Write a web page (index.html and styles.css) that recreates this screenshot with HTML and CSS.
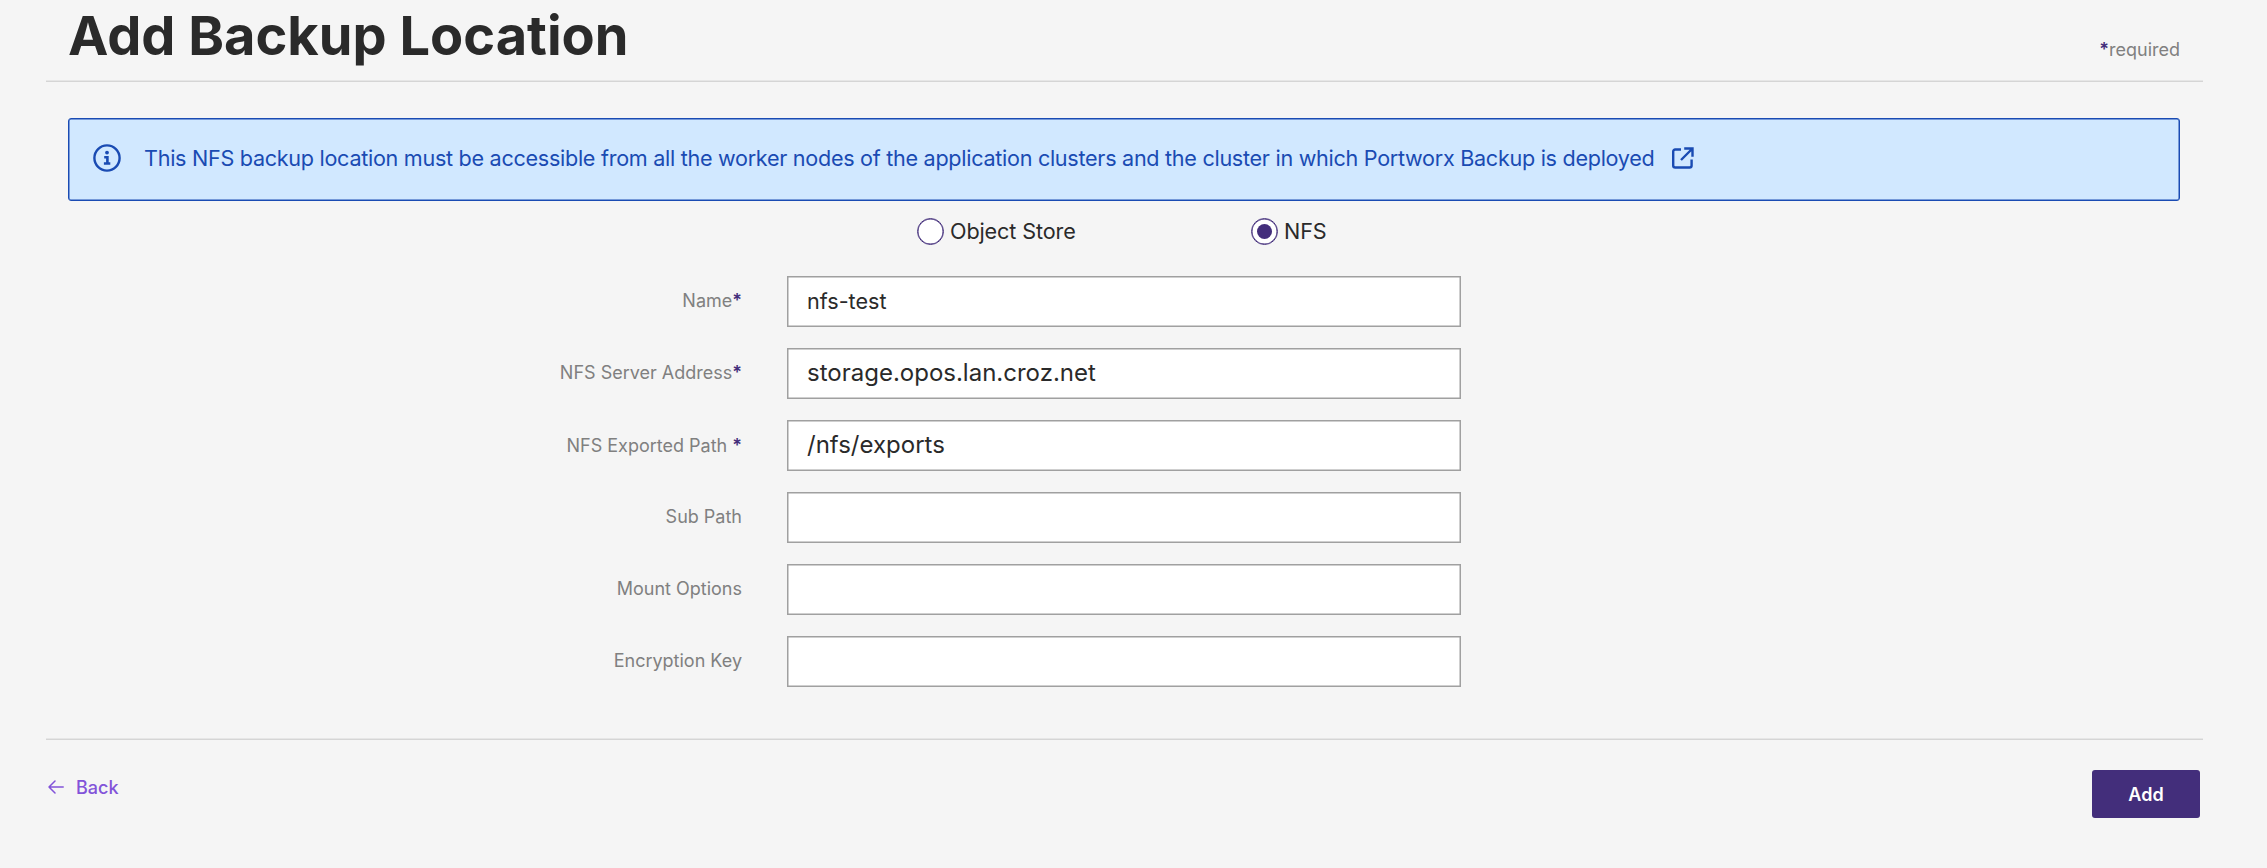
FILE: index.html
```html
<!DOCTYPE html>
<html lang="en">
<head>
<meta charset="utf-8">
<title>Add Backup Location</title>
<link rel="stylesheet" href="styles.css">
</head>
<body>
<main class="page">
  <header class="page-header">
    <h1 class="title">Add Backup Location</h1>
    <span class="required-note"><b class="star">*</b>required</span>
  </header>
  <div class="notice">
    <svg class="notice-icon" viewBox="0 0 28 28" fill="none" stroke="currentColor"><circle cx="14" cy="14" r="12.6" stroke-width="2.4"/><circle cx="14" cy="8.6" r="1.9" fill="currentColor" stroke="none"/><path d="M11.2 13.3h3.2v6.2M10.9 19.5h6.4" stroke-width="2.6"/></svg>
    <span class="notice-text">This NFS backup location must be accessible from all the worker nodes of the application clusters and the cluster in which Portworx Backup is deployed</span>
    <svg class="link-icon" viewBox="0 0 22 22" fill="none" stroke="currentColor" stroke-width="2.4"><path d="M9 2.5H3.2a2 2 0 0 0-2 2v14a2 2 0 0 0 2 2h14.4a2 2 0 0 0 2-2V12.4"/><path d="M12.2 1.5h8.3v8.2M20 2L9 13"/></svg>
  </div>
  <div class="store-types">
    <label class="choice choice-object"><span class="radio"></span><span class="choice-text">Object Store</span></label>
    <label class="choice"><span class="radio radio-on"></span><span class="choice-text">NFS</span></label>
  </div>
  <form class="fields">
    <div class="row"><label class="label"><span>Name</span><b class="star">*</b></label><div class="input input-small"><span>nfs-test</span></div></div>
    <div class="row"><label class="label"><span>NFS Server Address</span><b class="star">*</b></label><div class="input"><span>storage.opos.lan.croz.net</span></div></div>
    <div class="row"><label class="label label-low"><span>NFS Exported Path&nbsp;</span><b class="star">*</b></label><div class="input"><span>/nfs/exports</span></div></div>
    <div class="row"><label class="label"><span>Sub Path</span></label><div class="input"></div></div>
    <div class="row"><label class="label"><span>Mount Options</span></label><div class="input"></div></div>
    <div class="row"><label class="label"><span>Encryption Key</span></label><div class="input"></div></div>
  </form>
  <footer class="page-footer">
    <a class="back"><svg class="back-icon" viewBox="0 0 16 14" fill="none" stroke="currentColor" stroke-width="1.5" stroke-linecap="round" stroke-linejoin="round"><path d="M15.2 7H1M7 1L1 7l6 6"/></svg><span>Back</span></a>
    <button class="add" type="button">Add</button>
  </footer>
</main>
</body>
</html>
```
FILE: styles.css
```css
* { box-sizing: border-box; }
body { margin: 0; background: #f5f5f5; color: #2a2a2a; font-family: Inter, sans-serif; }
.page { width: 2157px; margin-left: 46px; height: 868px; }
.page-header { height: 82px; padding: 0 23px 0 22px; display: flex; justify-content: space-between; border-bottom: 1px solid #d5d5d5; box-shadow: inset 0 -1px #e6e6e6; }
.title { margin: 0; font-size: 54.15px; line-height: 66px; padding-top: 3px; font-weight: 700; white-space: nowrap; }
.required-note { font-size: 18px; line-height: 24px; padding-top: 38px; color: #808080; }
.star { color: #432e7b; font-weight: 600; }
.notice { margin: 36px 23px 0 22px; height: 83px; padding: 0 0 3px 24px; display: flex; align-items: center; border: 1px solid #1a4bb3; border-radius: 3px; background: #d1e8ff; color: #1a4bb3; box-shadow: inset 0 0 0 0.5px #1a4bb3; }
.notice-icon { width: 28px; height: 28px; margin-right: 23px; flex: none; }
.notice-text { font-size: 21.6px; line-height: 28px; letter-spacing: -0.29px; white-space: nowrap; }
.link-icon { width: 22px; height: 22px; margin-left: 18px; flex: none; }
.store-types { display: flex; height: 75px; padding: 17px 0 0 871px; }
.choice { display: flex; align-items: center; height: 27px; gap: 6px; font-size: 21.6px; letter-spacing: -0.12px; }
.choice-text { padding-bottom: 2px; }
.choice-object { width: 334px; }
.radio { width: 27px; height: 27px; border: 1px solid #432e7b; box-shadow: inset 0 0 0 0.5px #432e7b; border-radius: 50%; background: #fff; display: flex; align-items: center; justify-content: center; }
.radio-on::before { content: ""; width: 15px; height: 15px; border-radius: 50%; background: #432e7b; }
.fields { display: flex; flex-direction: column; gap: 21px; padding-left: 300px; }
.row { display: flex; align-items: center; height: 51px; gap: 45px; }
.label { width: 396px; padding-bottom: 1px; display: flex; justify-content: flex-end; font-size: 18px; line-height: 24px; color: #808080; white-space: nowrap; }
.label-low { padding: 1px 0 0; }
.input { width: 674px; height: 51px; padding: 0 0 2px 19px; display: flex; align-items: center; border: 1px solid #a0a0a0; box-shadow: inset 0 0 0 0.5px #a0a0a0; background: #fff; font-size: 24px; }
.input-small { font-size: 21.6px; }
.page-footer { margin-top: 51px; height: 100px; border-top: 1px solid #e6e6e6; box-shadow: inset 0 1px #d5d5d5; padding: 31px 3px 0 2px; display: flex; justify-content: space-between; }
.back { display: flex; align-items: center; gap: 12px; height: 34px; color: #8253d9; font-size: 18px; font-weight: 500; }
.back-icon { width: 16px; height: 14px; }
.add { width: 108px; height: 48px; border: 0; border-radius: 3px; background: #432e7b; color: #fff; font: 600 18px Inter, sans-serif; }
```
